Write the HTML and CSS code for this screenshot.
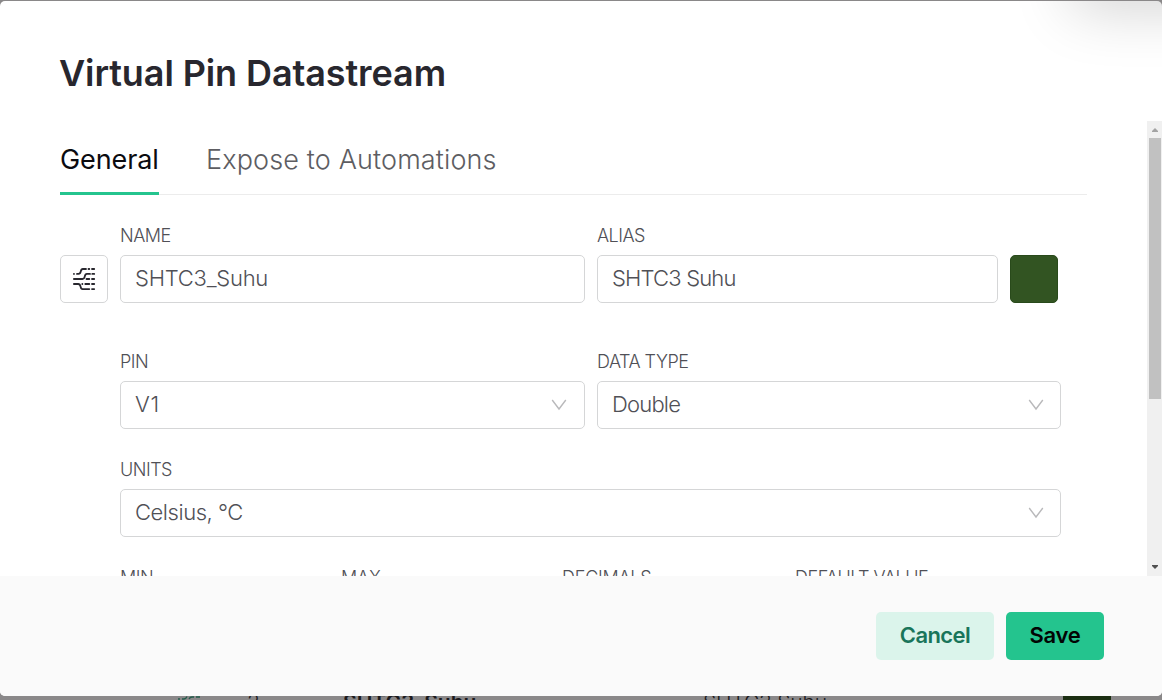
FILE: index.html
```html
<!DOCTYPE html>
<html lang="en">
<head>
<meta charset="utf-8">
<title>Virtual Pin Datastream</title>
<link rel="stylesheet" href="styles.css">
</head>
<body>
<div class="page">
  <section class="modal">
    <div class="corner-shade"></div>
    <header class="modal-header"><h1 class="title">Virtual Pin Datastream</h1></header>
    <div class="modal-body">
      <div class="content">
        <nav class="tabs">
          <span class="tab tab-active">General</span>
          <span class="tab tab-expose">Expose to Automations</span>
        </nav>
        <div class="row row-names">
          <button class="icon-button" aria-label="Icon">
            <svg width="24" height="24" viewBox="0 0 24 24" fill="none" stroke="#28272e" stroke-width="1.8" stroke-linecap="round">
              <path d="M1.900 6.900h.1M5 6.900h1.500c3.400 0 1.200-4.900 4.300-4.900h3.200M16.500 2h.8M20 2h2.200"/>
              <path d="M1.900 12h8.600c3.400 0 1.200-5.100 4.400-5.100h3.100M20.300 6.900h1.900M14.500 12h2.800M20 12h2.200"/>
              <path d="M1.900 17h4.300c3.600 0 1.200 5.100 4.400 5.100h6.700M10.300 17h.1M13.300 17h4M20 17h2.200M20 22.100h2.200"/>
            </svg>
          </button>
          <div class="field name"><span class="label l-name">NAME</span><div class="input"><span class="v-name">SHTC3_Suhu</span></div></div>
          <div class="field alias"><span class="label l-alias">ALIAS</span><div class="input"><span class="v-alias">SHTC3 Suhu</span></div></div>
          <button class="swatch" aria-label="Color"></button>
        </div>
        <div class="row row-types">
          <div class="field name"><span class="label l-pin">PIN</span><div class="input"><span class="v-pin">V1</span><svg class="chevron" viewBox="0 0 16 12"><path d="M1.200 1l6.800 9L14.800 1"/></svg></div></div>
          <div class="field type"><span class="label l-type">DATA TYPE</span><div class="input input-right"><span class="v-type">Double</span><svg class="chevron" viewBox="0 0 16 12"><path d="M1.200 1l6.800 9L14.800 1"/></svg></div></div>
        </div>
        <div class="row row-units">
          <div class="field units"><span class="label l-units">UNITS</span><div class="input input-right"><span class="v-units">Celsius, °C</span><svg class="chevron" viewBox="0 0 16 12"><path d="M1.200 1l6.800 9L14.800 1"/></svg></div></div>
        </div>
        <div class="row row-limits">
          <span class="label l-min">MIN</span><span class="label l-max">MAX</span><span class="label l-dec">DECIMALS</span><span class="label l-def">DEFAULT VALUE</span>
        </div>
      </div>
      <div class="scrollbar">
        <svg class="arrow" viewBox="0 0 15 17"><path fill="#a3a3a3" d="M8 7l3 3v1H5v-1z"/></svg>
        <div class="thumb"></div>
        <svg class="arrow arrow-down" viewBox="0 0 15 17"><path fill="#505050" d="M5 6h6v1l-3 3-3-3z"/></svg>
      </div>
    </div>
    <footer class="modal-footer">
      <button class="btn cancel"><span>Cancel</span></button>
      <button class="btn save"><span>Save</span></button>
    </footer>
  </section>
  <div class="list-row">
    <svg class="row-icon" viewBox="0 0 24 4" fill="none" stroke="#245b4b" stroke-width="1.300"><path d="M2 3h2M6 3h2q2 0 3-2.500M13 3q1-2 3-2h2M20 1h4"/></svg>
    <span class="row-id">2</span>
    <span class="row-name">SHTC3_Suhu</span>
    <span class="row-alias">SHTC3 Suhu</span>
    <span class="row-color"></span>
  </div>
</div>
</body>
</html>
```
FILE: styles.css
```css
* { box-sizing: border-box; }
body { margin: 0; font-family: Inter, "Liberation Sans", sans-serif; }
button { font: inherit; margin: 0; padding: 0; border: 0; }
.page { width: 1162px; height: 700px; padding-top: 1px; background: #8a8889; overflow: hidden; }
.modal { position: relative; height: 695px; display: flex; flex-direction: column; background: #fff; border-radius: 5px; overflow: hidden; }
.corner-shade { position: absolute; top: -62px; left: 1072px; width: 240px; height: 62px; box-shadow: 0 8px 60px rgba(0, 0, 0, .18); }
.modal-header { height: 120px; padding: 49px 59px 0; }
.title { margin: 0; font-size: 36px; line-height: 46px; font-weight: 600; color: #28272e; letter-spacing: -.1px; white-space: nowrap; }
.modal-body { height: 455px; display: flex; overflow: hidden; }
.content { width: 1147px; padding-left: 60px; }
.tabs { display: flex; gap: 47px; width: 1027px; height: 74px; border-bottom: 1px solid #ececec; }
.tab { height: 74px; padding-top: 20px; font-size: 27px; line-height: 37px; font-weight: 300; color: #5d5d62; white-space: nowrap; }
.tab-active { width: 99px; color: #0b0b10; font-weight: 400; letter-spacing: -.1px; border-bottom: 3px solid #24c48e; }
.tab-expose { letter-spacing: .14px; }
.row { display: flex; gap: 12px; align-items: flex-end; }
.row-names { margin-top: 28px; }
.row-types { margin-top: 46px; padding-left: 60px; }
.row-units { margin-top: 28px; padding-left: 60px; }
.field { display: flex; flex-direction: column; }
.name { width: 465px; }
.alias { width: 401px; }
.type { width: 464px; }
.units { width: 941px; }
.label { height: 32px; padding-top: 1px; font-size: 18px; line-height: 24px; font-weight: 300; color: #505056; letter-spacing: -.5px; white-space: nowrap; }
.l-dec { letter-spacing: -.25px; }
.l-max { letter-spacing: -.2px; }
.input { height: 48px; padding: 0 17px 0 14px; display: flex; align-items: center; justify-content: space-between; border: 1px solid #d5d6d7; border-radius: 5px; font-size: 22px; line-height: 44px; font-weight: 300; color: #505056; white-space: nowrap; }
.input-right { padding-right: 16px; }
.input span { padding-bottom: 2px; }
.v-name { letter-spacing: -.24px; }
.v-alias { letter-spacing: -.82px; }
.v-pin { letter-spacing: .8px; }
.v-type { letter-spacing: -.8px; }
.v-units { letter-spacing: -.45px; }
.chevron { width: 16px; height: 12px; fill: none; stroke: #b9b9bb; stroke-width: 1.400; }
.icon-button { width: 48px; height: 48px; display: grid; place-items: center; background: #fff; border: 1px solid #d5d6d7; border-radius: 5px; }
.swatch { width: 48px; height: 48px; background: #325422; border: 1px solid #294a1b; border-radius: 5px; }
.row-limits { display: grid; grid-template-columns: 221px 221px 233px 200px; gap: 0; margin-top: 28px; padding-left: 60px; }
.scrollbar { width: 15px; height: 455px; background: #f0f0f0; display: flex; flex-direction: column; }
.arrow { width: 15px; height: 17px; }
.thumb { width: 12px; height: 261px; margin-left: 2px; background: #c1c1c1; }
.arrow-down { margin-top: auto; }
.modal-footer { height: 120px; display: flex; justify-content: flex-end; gap: 12px; padding: 36px 58px 0; background: #fafafa; }
.btn { height: 48px; border-radius: 5px; font-size: 22px; line-height: 46px; font-weight: 600; white-space: nowrap; }
.btn span { display: block; height: 48px; }
.cancel { width: 118px; background: #dbf4eb; color: #19755a; letter-spacing: -.6px; }
.save { width: 98px; background: #24c48e; color: #020504; letter-spacing: -.3px; }
.list-row { height: 4px; display: grid; grid-template-columns: 24px 92px 360px 359px 48px; padding-left: 176px; column-gap: 0; overflow: hidden; color: #1b1a1d; font-size: 21px; line-height: 24px; }
.row-icon { width: 24px; height: 4px; }
.row-id { padding-left: 47px; margin-top: -5px; font-weight: 300; }
.row-name { padding-left: 51px; margin-top: -5px; font-weight: 600; }
.row-alias { padding-left: 51px; margin-top: -5px; font-weight: 300; letter-spacing: -.2px; }
.row-color { height: 4px; margin-left: 52px; width: 48px; background: #1b2e12; }
```
